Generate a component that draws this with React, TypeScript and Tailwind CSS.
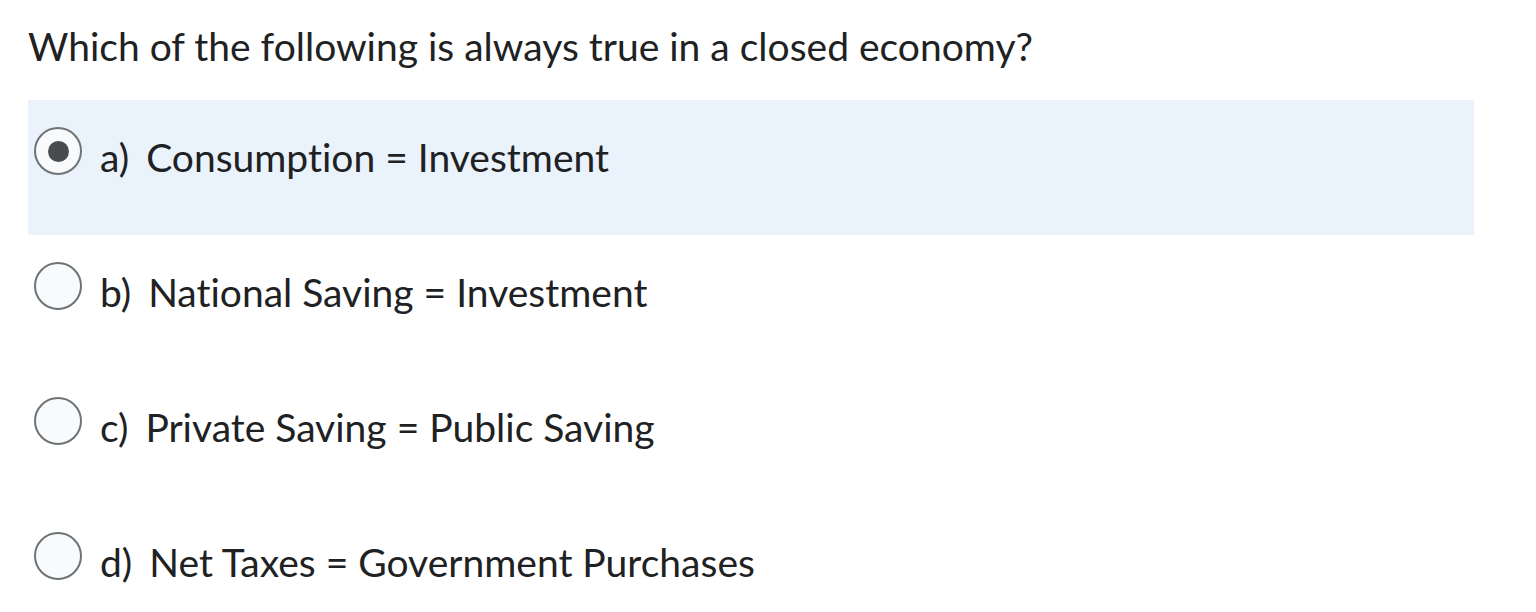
const options = [
  { label: "a)", text: "Consumption = Investment", selected: true },
  { label: "b)", text: "National Saving = Investment", selected: false },
  { label: "c)", text: "Private Saving = Public Saving", selected: false },
  { label: "d)", text: "Net Taxes = Government Purchases", selected: false },
];

const Radio = ({ checked }: { checked: boolean }) => {
  return (
    <div className="w-[48px] h-[48px] rounded-full border-[2px] border-[#6e7376] bg-[#f9fafb] flex items-center justify-center shrink-0">
      {checked && <div className="w-[21px] h-[21px] rounded-full bg-[#494c4e]" />}
    </div>
  );
};

export default function App() {
  return (
    <div className="bg-white w-[1536px] h-[612px] px-[28px] pt-[24px] font-['Lato',sans-serif] text-[#202122] [font-variant-ligatures:none]">
      <div className="text-[39px] leading-[45px]">Which of the following is always true in a closed economy?</div>

      <div className="mt-[31px] w-[1446px]">
        {options.map((o) => (
          <div
            key={o.label}
            className={`h-[135px] flex items-start pl-[6px] ${o.selected ? "bg-[#eaf2fc]" : ""}`}
          >
            <div className="mt-[27px]">
              <Radio checked={o.selected} />
            </div>
            <div className="mt-[35px] ml-[18px] text-[39px] leading-[45px] whitespace-nowrap">
              <span className="mr-[17px]">{o.label}</span>
              {o.text}
            </div>
          </div>
        ))}
      </div>
    </div>
  );
}
